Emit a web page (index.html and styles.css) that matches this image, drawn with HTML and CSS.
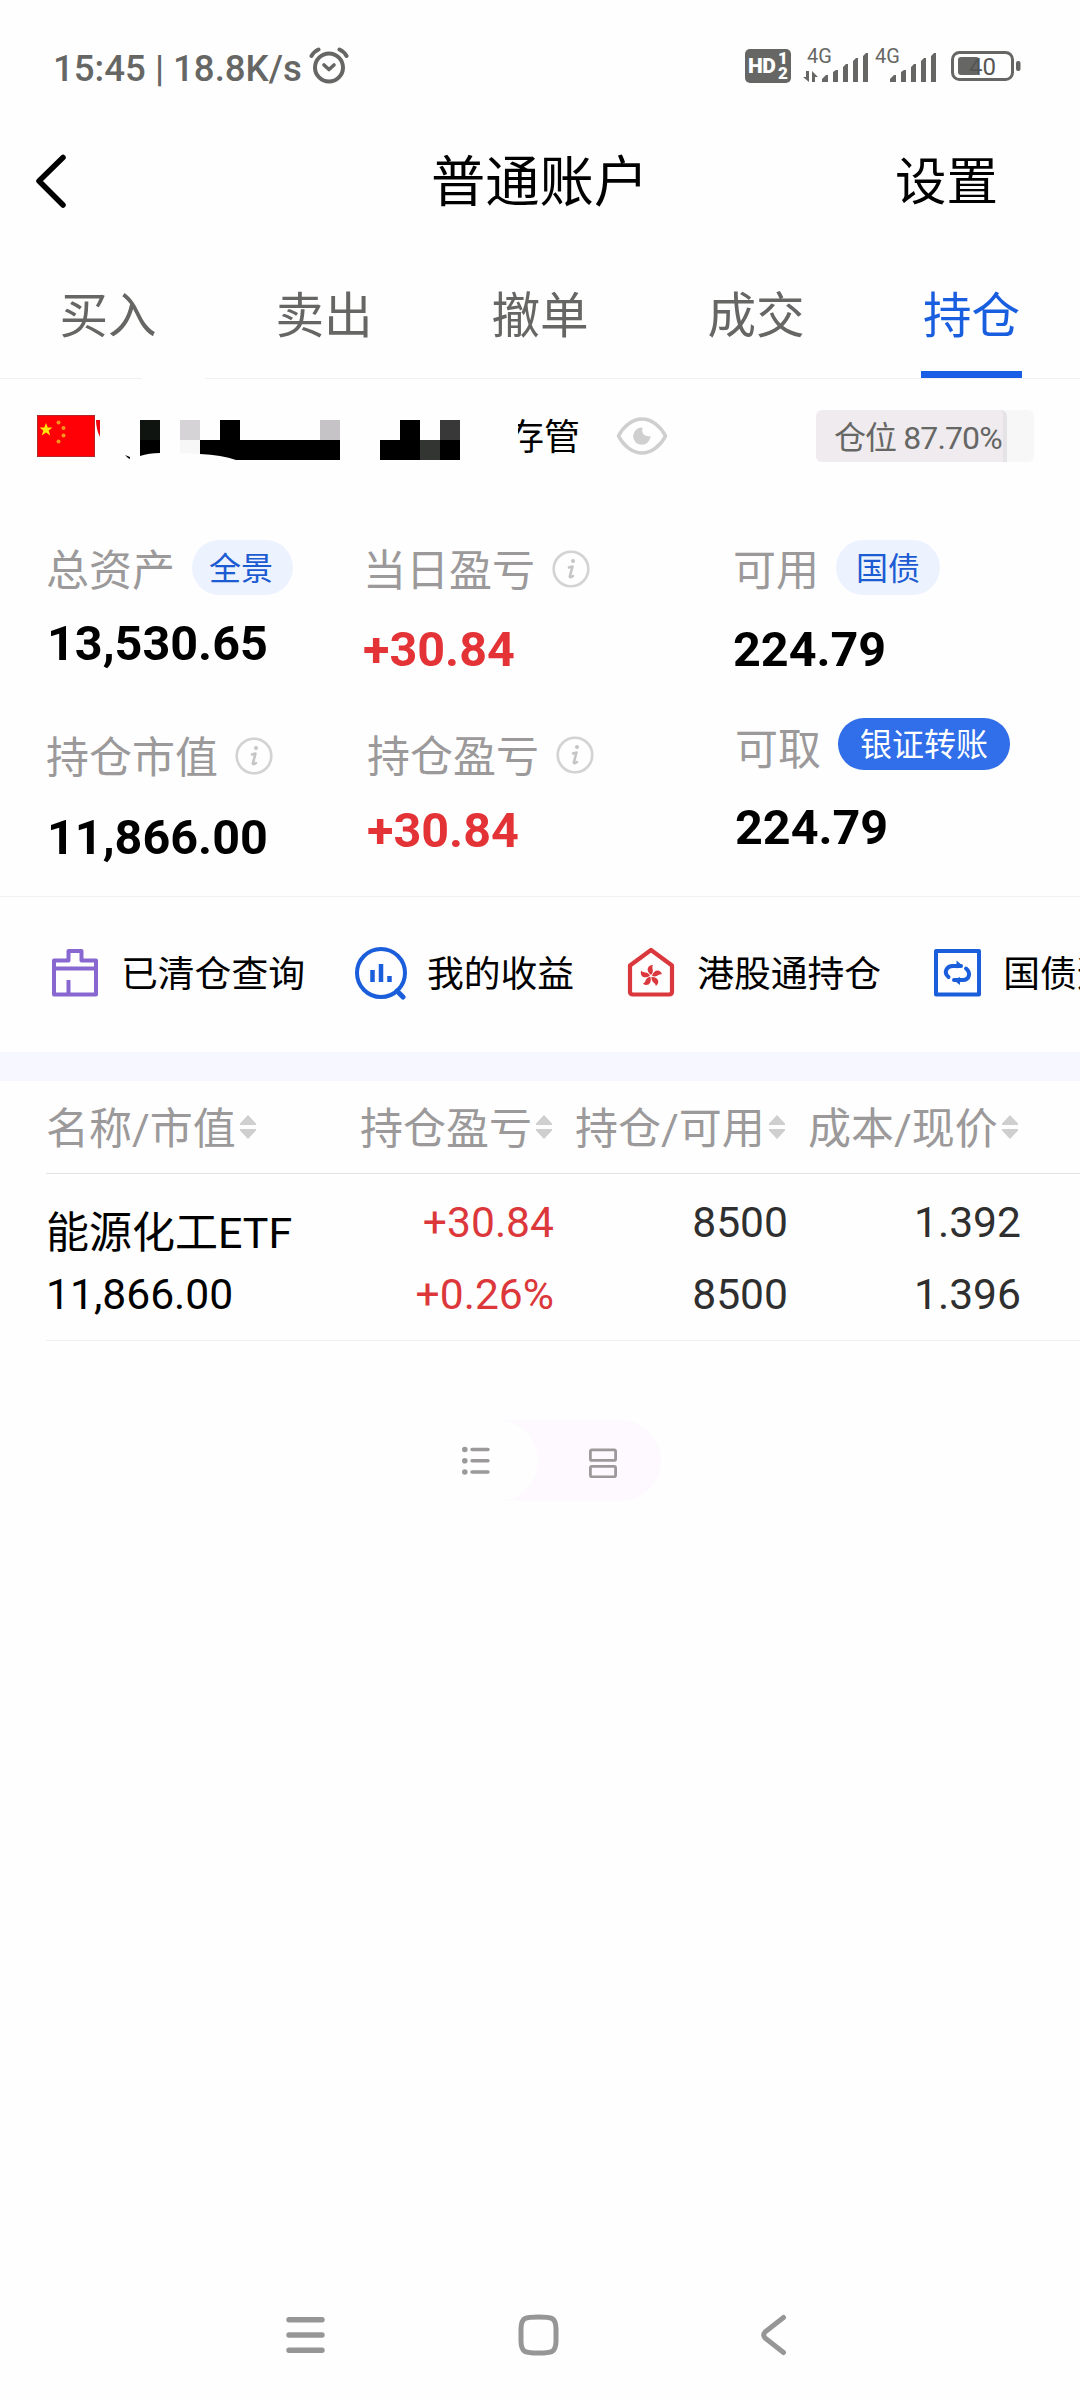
FILE: index.html
```html
<!DOCTYPE html>
<html lang="zh-CN">
<head>
<meta charset="utf-8">
<title>普通账户</title>
<link rel="stylesheet" href="styles.css">
</head>
<body>
<svg class="defs" width="0" height="0">
  <symbol id="info" viewBox="0 0 38 38"><circle cx="19" cy="19" r="17.3" fill="none" stroke="#d4d2d3" stroke-width="2.6"/><circle cx="21" cy="11" r="2" fill="#c6c4c5"/><path d="M17 17.500L20.500 16.500L17.800 26.500Q18 28 21 26" fill="none" stroke="#c6c4c5" stroke-width="2.600" stroke-linecap="round" stroke-linejoin="round"/></symbol>
  <symbol id="sort" viewBox="0 0 16 24"><path d="M8 0L16 8.500V10H0V8.500ZM0 14H16V15.500L8 24L0 15.500Z" fill="#cfcfcf"/></symbol>
</svg>
<div class="screen">
  <header class="status">
    <span class="clock">15:45 | 18.8K/s</span>
    <svg class="alarm" width="40" height="38" viewBox="0 0 40 38" fill="none" stroke="#666764" stroke-linecap="round"><circle cx="20" cy="21.500" r="14" stroke-width="4"/><path d="M2.500 10Q5 5.500 9.500 3.500M37.500 10Q35 5.500 30.500 3.500" stroke-width="4"/><path d="M15 19L20 23.500L25 19" stroke-width="3.600" stroke-linejoin="round"/></svg>
    <span class="hd"><b>HD</b><span><i>1</i><i>2</i></span></span>
    <div class="signal">
      <span>4G</span>
      <svg width="68" height="34" viewBox="0 0 68 34" fill="#666764"><path d="M7 21V32L1 27H4V21ZM10 32V21L16 27H13V32ZM20 32V29L24 25H26V32ZM31 32V22L34 20H36V32ZM41 32V17L44 14H46V32ZM51 32V11L54 8H56V32ZM61 32V6L64 3H66V32Z"/></svg>
    </div>
    <div class="signal second">
      <span>4G</span>
      <svg width="68" height="34" viewBox="0 0 68 34" fill="#666764"><path d="M20 32V29L24 25H26V32ZM31 32V22L34 20H36V32ZM41 32V17L44 14H46V32ZM51 32V11L54 8H56V32ZM61 32V6L64 3H66V32Z"/></svg>
    </div>
    <svg class="battery" width="70" height="32" viewBox="0 0 70 32"><rect x="1.500" y="2.500" width="60" height="27" rx="7" fill="none" stroke="#666764" stroke-width="3"/><rect x="7" y="7" width="21" height="18" rx="3" fill="#666764"/><rect x="65" y="11" width="4.500" height="10" rx="2" fill="#666764"/><text x="18" y="24.500" class="level">40</text></svg>
  </header>

  <nav class="titlebar">
    <svg class="back" width="34" height="58" viewBox="0 0 34 58" fill="none" stroke="#000" stroke-width="5.500" stroke-linecap="round" stroke-linejoin="round"><path d="M29 5.500L5 29L29 53"/></svg>
    <h1>普通账户</h1>
    <span class="settings">设置</span>
  </nav>

  <nav class="tabs">
    <span>买入</span><span>卖出</span><span>撤单</span><span>成交</span><span class="active">持仓</span>
  </nav>
  <div class="tabline"></div>

  <section class="account">
    <svg class="masked" width="424" height="50" viewBox="37 412 424 50">
      <rect x="37.500" y="415.500" width="57" height="41" fill="#fe0006" stroke="#b3262c"/>
      <path d="M46 423L47.700 427.500H52.500L48.700 430.500L50.200 435.500L46 432.500L41.800 435.500L43.300 430.500L39.500 427.500H44.300Z" fill="#ffe70a"/>
      <g fill="#f7941d"><circle cx="58.500" cy="422.500" r="2"/><circle cx="63.500" cy="428" r="2"/><circle cx="63.500" cy="435.500" r="2"/><circle cx="58.500" cy="441.500" r="2"/></g>
      <path d="M96 420H100V437Q96 429 96 420Z" fill="#f0000c"/>
      <path d="M125 455L130 457V459L128 458Z"/>
      <rect x="140" y="420" width="20" height="20" fill="#101411"/>
      <path d="M140 440H160V453Q149 453 140 456Z"/>
      <rect x="180" y="420" width="20" height="20" fill="#d5d3d6"/>
      <path d="M180 440H200V454L180 453Z" fill="#f7f7f7"/>
      <path d="M200 440H220V420H240V440H340V460H236Q222 455 200 454Z"/>
      <rect x="320" y="420" width="20" height="20" fill="#c5c3c6"/>
      <path d="M380 440H400V420H420V440H460V460H380Z"/>
      <rect x="420" y="440" width="20" height="20" fill="#333532"/>
      <rect x="440" y="420" width="20" height="20" fill="#383838"/>
    </svg>
    <span class="custody">存管</span>
    <svg class="eye" width="52" height="40" viewBox="0 0 52 40"><path d="M2.500 20C7 11 16 3 26 3S45 11 49.500 20C45 29 36 37 26 37S7 29 2.500 20Z" fill="none" stroke="#cfcfcf" stroke-width="3.600" stroke-linejoin="round"/><path d="M26.500 11.500Q24.500 19 33 20.500Q34.500 19.500 34.500 20A8.700 8.700 0 1 1 26.500 11.500Z" fill="#cfcfcf"/></svg>
    <div class="ratio"><div class="ratio-fill" style="width:87.7%"></div><span>仓位 87.70%</span></div>
  </section>

  <section class="assets">
    <div class="cell">
      <div class="label">总资产<span class="pill">全景</span></div>
      <strong class="a1">13,530.65</strong>
    </div>
    <div class="cell c2 today">
      <div class="label">当日盈亏<svg class="info"><use href="#info"/></svg></div>
      <strong class="red a2">+30.84</strong>
    </div>
    <div class="cell c3">
      <div class="label">可用<span class="pill bond">国债</span></div>
      <strong class="a2">224.79</strong>
    </div>
    <div class="cell r2">
      <div class="label">持仓市值<svg class="info"><use href="#info"/></svg></div>
      <strong class="b1">11,866.00</strong>
    </div>
    <div class="cell c2 r2 shift">
      <div class="label">持仓盈亏<svg class="info"><use href="#info"/></svg></div>
      <strong class="red b2">+30.84</strong>
    </div>
    <div class="cell c3 r2 raised">
      <div class="label">可取<span class="pill solid">银证转账</span></div>
      <strong class="b3">224.79</strong>
    </div>
  </section>

  <section class="shortcuts">
    <div class="q1"><svg width="54" height="54" viewBox="0 0 54 54" fill="none" stroke="#8867d0" stroke-width="4" stroke-linejoin="round"><path d="M6 14.500H20.500V5H33.500V14.500H48V48.500H6ZM6 22.500H48M20.500 34V48"/></svg>已清仓查询</div>
    <div class="q2"><svg width="54" height="54" viewBox="0 0 54 54" fill="none" stroke="#1b5edb" stroke-width="4"><circle cx="27" cy="27" r="24"/><path d="M43 45L49 51" stroke-width="5" stroke-linecap="round"/><path d="M18.500 24V36M27 18V36M35.500 30V36" stroke-width="4.500"/></svg>我的收益</div>
    <div class="q3"><svg width="54" height="54" viewBox="0 0 54 54"><path d="M6 19.500L27 4L48 19.500V45.500Q48 48.500 45 48.500H9Q6 48.500 6 45.500Z" fill="none" stroke="#da383c" stroke-width="4.200" stroke-linejoin="round"/><g fill="#da383c"><path id="petal" d="M27 29C21 24 24 19 29 19C27 22 31 25 27 29Z"/><use href="#petal" transform="rotate(72 27 30)"/><use href="#petal" transform="rotate(144 27 30)"/><use href="#petal" transform="rotate(216 27 30)"/><use href="#petal" transform="rotate(288 27 30)"/></g></svg>港股通持仓</div>
    <div class="q4"><svg width="54" height="54" viewBox="0 0 54 54" fill="none" stroke="#1b5edb" stroke-width="4" stroke-linejoin="round"><rect x="6" y="5" width="43" height="43.500"/><path d="M18.500 31C13.500 27 16 20 23 20H31M36 22.500C41.500 27 39 34 33 34H24" stroke-linecap="round"/><path d="M26.500 14.500L33 20L26.500 22.500ZM30 31V39L23.500 34Z" fill="#1b5edb" stroke="none"/></svg>国债逆回购</div>
  </section>
  <div class="band"></div>

  <section class="holdings">
    <div class="row head">
      <span class="h1">名称/市值<svg><use href="#sort"/></svg></span>
      <span class="h2">持仓盈亏<svg><use href="#sort"/></svg></span>
      <span class="h3">持仓/可用<svg><use href="#sort"/></svg></span>
      <span class="h4">成本/现价<svg><use href="#sort"/></svg></span>
    </div>
    <div class="row item">
      <div class="name"><span>能源化工ETF</span><span>11,866.00</span></div>
      <div class="num red"><span>+30.84</span><span>+0.26%</span></div>
      <div class="num n3"><span>8500</span><span>8500</span></div>
      <div class="num n4"><span>1.392</span><span>1.396</span></div>
    </div>
  </section>

  <div class="toggle">
    <div class="knob"><svg width="28" height="30" viewBox="0 0 28 30"><g fill="#9b999a"><circle cx="2.800" cy="3.500" r="2.800"/><circle cx="2.800" cy="14.800" r="2.800"/><circle cx="2.800" cy="26" r="2.800"/></g><path d="M10 3.500H26M10 14.800H26M10 26H26" stroke="#9b999a" stroke-width="3.400" stroke-linecap="round"/></svg></div>
    <svg class="cards" width="28" height="30" viewBox="0 0 28 30" fill="none" stroke="#9b999a" stroke-width="2.800"><rect x="1.400" y="1.900" width="25.200" height="10.500" rx="1.500"/><rect x="1.400" y="18.300" width="25.200" height="10.500" rx="1.500"/></svg>
  </div>

  <footer class="sysnav">
    <svg width="39" height="42" viewBox="0 0 39 42" stroke="#969696" stroke-width="5.400" stroke-linecap="round"><path d="M3 5.700H36M3 21H36M3 36.300H36"/></svg>
    <svg class="home" width="41" height="42" viewBox="0 0 41 42"><path d="M20.500 3C33 3 38 3 38 15V27C38 39 33 39 20.500 39S3 39 3 27V15C3 3 8 3 20.500 3Z" fill="none" stroke="#969696" stroke-width="5"/></svg>
    <svg class="prev" width="27" height="42" viewBox="0 0 27 42"><path d="M23.500 3.500L5 18Q2.500 21 5 24L23.500 38.500" fill="none" stroke="#969696" stroke-width="5" stroke-linecap="round"/></svg>
  </footer>
</div>
</body>
</html>
```
FILE: styles.css
```css
* { box-sizing: border-box; }
body { margin: 0; background: #fefefe; font-family: Roboto, "Noto Sans CJK SC", sans-serif; color: #000; }
svg { display: block; flex: none; }
.defs { position: absolute; }
.screen { width: 1080px; height: 2400px; overflow: hidden; display: flex; flex-direction: column; }
.screen > * { flex: none; }

.status { height: 100px; padding: 46px 0 0 53px; display: flex; align-items: flex-start; color: #666764; }
.clock { width: 249px; font-size: 36.600px; font-weight: 500; line-height: 45px; white-space: nowrap; }
.alarm { margin-left: 7px; }
.hd { width: 46px; height: 34px; margin: 3px 0 0 396px; background: #666764; border-radius: 5px; color: #fff; display: flex; align-items: center; padding-left: 3px; }
.hd b { font-size: 21px; line-height: 34px; font-weight: 900; width: 30px; letter-spacing: -.5px; }
.hd span { display: flex; flex-direction: column; }
.hd i { font: 900 17px/15px Roboto, sans-serif; }
.signal { width: 68px; height: 36px; margin-left: 11px; display: grid; }
.signal > * { grid-area: 1 / 1; }
.signal > svg { margin-top: 4px; }
.signal span { font-size: 20px; line-height: 20px; padding-left: 5px; }
.signal.second { margin-left: 0; }
.battery { margin: 4px 0 0 13px; }
.level { font-size: 24px; fill: #555653; }

.titlebar { height: 160px; display: grid; grid-template-columns: 431px 464px 1fr; align-items: center; padding-top: 5px; }
.back { margin: -3px 0 0 34px; }
h1 { margin: 0; font-size: 54.300px; line-height: 64px; font-weight: 400; }
.settings { font-size: 51.500px; line-height: 64px; }

.tabs { height: 118px; display: grid; grid-template-columns: repeat(5, 1fr); justify-items: center; font-size: 48.600px; line-height: 114px; color: #666764; }
.tabs span { height: 118px; }
.tabs .active { color: #1a5ee0; width: 101px; margin-right: 1px; text-align: center; border-bottom: 7px solid #1a5ee6; }
.tabline { height: 1px; background: linear-gradient(90deg, #f1f1f1 142px, transparent 142px, transparent 205px, #f1f1f1 205px); }

.account { height: 143px; display: flex; align-items: flex-start; padding: 31px 0 0 37px; }
.masked { margin-top: 2px; }
.custody { margin: 0 0 0 47px; font-size: 36px; line-height: 57px; clip-path: inset(0 0 0 10px); }
.eye { margin: 6px 0 0 36px; }
.ratio { width: 218px; height: 52px; margin-left: 148px; background: #f7f7f7; border-radius: 6px; display: grid; overflow: hidden; }
.ratio > * { grid-area: 1 / 1; }
.ratio-fill { background: #efebef; border-right: 4px solid #e6e3e6; border-radius: 6px; }
.ratio span { font-size: 32px; letter-spacing: -.9px; line-height: 56px; padding-left: 18px; color: #666764; white-space: nowrap; }

.assets { height: 375px; padding: 21px 0 0 46px; display: grid; grid-template-columns: 320px 367px 1fr; grid-template-rows: 187px 166px; border-bottom: 1px solid #f1f1f1; }
.label { display: flex; align-items: center; height: 56px; font-size: 43px; line-height: 56px; color: #9b999a; }
.info { width: 38px; height: 38px; margin: 0 0 5px 17px; }
.pill { height: 55px; margin: 0 0 7px 17px; padding: 0 20px 0 17px; border-radius: 28px; background: #edf2ff; color: #1c5bd2; font-size: 32px; line-height: 58px; }
.pill.bond { padding: 0 20px; }
.pill.solid { height: 52px; margin-bottom: 12px; padding: 0 22px; background: #306eea; color: #fff; line-height: 54px; }
strong { display: block; font-size: 48.500px; line-height: 56px; font-weight: 700; margin-left: 1px; }
.red { color: #e33336; }
.a1 { margin-top: 17px; }
.a2 { margin-top: 23px; }
.b1 { margin-top: 24px; }
.b2 { margin-top: 18px; }
.b3 { margin-top: 22px; }
.today { margin-left: -3px; }
.today .red { margin-left: 0; }
.shift { padding-left: 1px; margin-top: -1px; }
.shift .red { margin-left: 0; }
.raised { padding-left: 2px; margin-top: -8px; }
.c3 strong { margin-left: 0; }

.shortcuts { height: 155px; display: flex; align-items: center; padding-left: 48px; font-size: 36.800px; line-height: 57px; white-space: nowrap; overflow: hidden; }
.shortcuts > div { display: flex; flex: none; gap: 19px; }
.q2 { margin-left: 49px; }
.q3 { margin-left: 50px; }
.q4 { margin-left: 49px; }
.band { height: 29px; background: #f6f7ff; }

.holdings { padding-left: 46px; font-size: 43px; }
.row { display: grid; grid-template-columns: 314px 215px 233px 1fr; }
.head { height: 93px; line-height: 96px; border-bottom: 1px solid #e3e3e3; color: #9b999a; white-space: nowrap; }
.head span { display: flex; align-items: center; }
.head svg { width: 16px; height: 24px; margin: 0 0 5px 4px; }
.item { grid-template-columns: 313px 195px 234px 233px; height: 167px; border-bottom: 1px solid #f0f0f0; font-size: 42.600px; }
.item > div { display: flex; flex-direction: column; line-height: 72px; padding-top: 12px; }
.num { align-items: flex-end; color: #2f2f2f; }
.num.red { color: #dc383b; }
.name span:first-child { font-size: 43px; line-height: 56px; padding-top: 19px; height: 72px; }

.toggle { width: 241px; height: 81px; margin: 79px 0 0 420px; border-radius: 41px; background: #fdf9fe; display: flex; align-items: center; }
.knob { width: 118px; height: 81px; border-radius: 41px; background: #fefefe; display: flex; align-items: center; padding-left: 42px; }
.cards { margin: 4px 0 0 51px; }

.sysnav { margin-top: auto; height: 86px; display: flex; padding-left: 286px; }
.home { margin-left: 193px; }
.prev { margin-left: 201px; }
```
